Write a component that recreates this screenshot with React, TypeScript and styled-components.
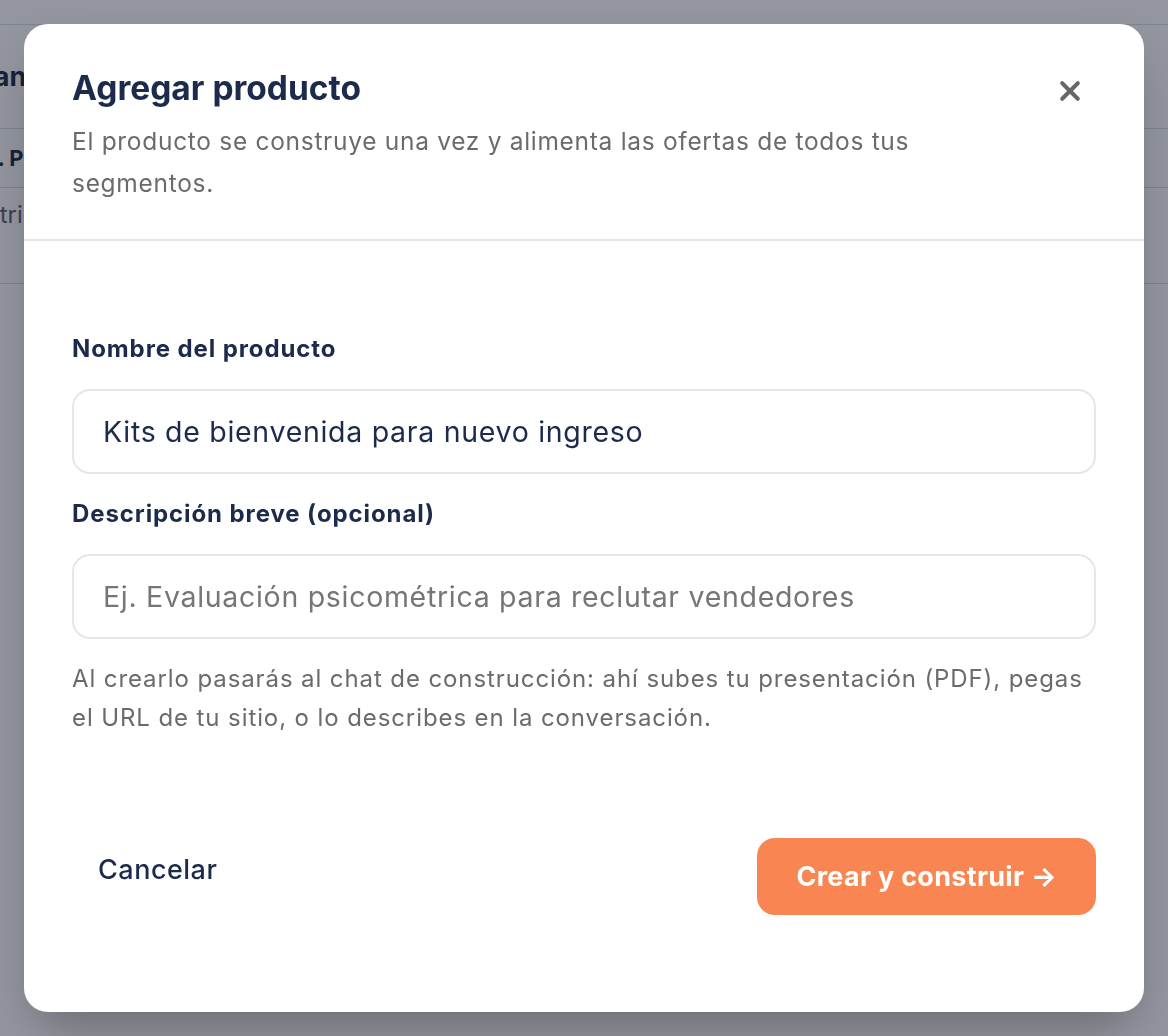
import React, { useState } from 'react'
import styled, { createGlobalStyle } from 'styled-components'

const GlobalStyle = createGlobalStyle`
  html,
  body {
    margin: 0;
    padding: 0;
    background: #ffffff;
    font-family: Inter, 'Noto Sans', sans-serif;
    -webkit-font-smoothing: antialiased;
  }
  * {
    box-sizing: border-box;
  }
`

// the page that sits behind the dialog
const Page = styled.main`
  height: 1036px;
  overflow: hidden;
  padding-top: 24px;
`

const PageRow = styled.div<{ $height: number; $top?: boolean }>`
  height: ${({ $height }) => $height}px;
  display: flex;
  align-items: ${({ $top }) => ($top ? 'flex-start' : 'center')};
  padding-top: ${({ $top }) => ($top ? '12px' : '0')};
  border-top: 1px solid #d9dce2;
  white-space: nowrap;
`

const PageTitle = styled.h1<{ $shift: number }>`
  margin: 0 0 0 ${({ $shift }) => $shift}px;
  font-size: 27px;
  font-weight: 700;
  color: #1c2b4b;
`

const PageHead = styled.span<{ $shift: number }>`
  margin-left: ${({ $shift }) => $shift}px;
  font-size: 22px;
  font-weight: 700;
  color: #1c2b4b;
`

const PageCell = styled.span<{ $shift: number }>`
  margin-left: ${({ $shift }) => $shift}px;
  font-size: 24px;
  color: #5f6470;
`

const Overlay = styled.div`
  position: fixed;
  inset: 0;
  background: rgba(15, 23, 42, 0.45);
  display: flex;
  padding: 24px;
`

const Dialog = styled.section`
  flex: 1;
  background: #ffffff;
  border-radius: 24px;
  box-shadow: 0 25px 50px -12px rgba(0, 0, 0, 0.3);
  display: flex;
  flex-direction: column;
  overflow: hidden;
`

const Header = styled.header`
  display: flex;
  align-items: flex-start;
  justify-content: space-between;
  padding: 44px 48px 35px;
  border-bottom: 2px solid #e7e6e1;
`

const HeaderText = styled.div`
  display: flex;
  flex-direction: column;
  gap: 12px;
  max-width: 880px;
`

const Title = styled.h2`
  margin: 0;
  font-size: 33.5px;
  line-height: 40px;
  font-weight: 700;
  color: #1c2b4b;
`

const Subtitle = styled.p`
  margin: 0;
  font-size: 24.5px;
  line-height: 42px;
  letter-spacing: 0.7px;
  color: #6b6b6b;
`

const CloseButton = styled.button`
  margin-top: 8px;
  margin-right: 11px;
  padding: 4px;
  background: none;
  border: none;
  cursor: pointer;
  display: flex;
  color: #676767;
`

const Body = styled.div`
  flex: 1;
  display: flex;
  flex-direction: column;
  padding: 93px 48px 0;
`

const Fields = styled.div`
  display: flex;
  flex-direction: column;
  gap: 25px;
`

const Field = styled.div`
  display: flex;
  flex-direction: column;
  gap: 25px;
`

const Label = styled.label`
  font-size: 24px;
  line-height: 30px;
  font-weight: 700;
  letter-spacing: 0.9px;
  color: #1c2b4b;
`

const Input = styled.input`
  width: 100%;
  height: 85px;
  padding: 0 29px;
  border: 2px solid #e7e6e1;
  border-radius: 18px;
  font-family: Inter, 'Noto Sans', sans-serif;
  font-size: 28.5px;
  letter-spacing: 0.7px;
  color: #1c2b4b;
  background: #ffffff;
  outline: none;

  &::placeholder {
    color: #767676;
  }
`

const Help = styled.p`
  margin: 20px 0 0;
  font-size: 24px;
  line-height: 39px;
  letter-spacing: 0.9px;
  color: #6b6b6b;
`

const Footer = styled.footer`
  display: flex;
  align-items: center;
  justify-content: space-between;
  padding: 0 48px 97px 48px;
`

const GhostButton = styled.button`
  background: none;
  border: none;
  padding: 12px 26px;
  margin-bottom: 14px;
  font-family: Inter, 'Noto Sans', sans-serif;
  font-size: 27px;
  font-weight: 500;
  letter-spacing: 0.5px;
  color: #1c2b4b;
  cursor: pointer;
`

const PrimaryButton = styled.button`
  height: 77px;
  padding: 0 39px;
  border: none;
  border-radius: 18px;
  background: #f98652;
  font-family: Inter, 'Noto Sans', sans-serif;
  font-size: 27px;
  font-weight: 700;
  letter-spacing: 0.3px;
  color: #ffffff;
  cursor: pointer;
`

const CloseIcon = () => (
  <svg width="22" height="22" viewBox="0 0 24 24" fill="none">
    <path
      d="M3.5 3.5L20.5 20.5M20.5 3.5L3.5 20.5"
      stroke="currentColor"
      strokeWidth="4.4"
      strokeLinecap="round"
    />
  </svg>
)

const App = () => {
  const [name, setName] = useState('Kits de bienvenida para nuevo ingreso')
  const [description, setDescription] = useState('')

  return (
    <>
      <GlobalStyle />
      <Page>
        <PageRow $height={104}>
          <PageTitle $shift={-31}>Planes</PageTitle>
        </PageRow>
        <PageRow $height={59}>
          <PageHead $shift={-12}>1. Pe</PageHead>
        </PageRow>
        <PageRow $height={96} $top>
          <PageCell $shift={-36}>Métrica</PageCell>
        </PageRow>
        <PageRow $height={200} />
      </Page>
      <Overlay>
        <Dialog role="dialog" aria-labelledby="dialog-title">
          <Header>
            <HeaderText>
              <Title id="dialog-title">Agregar producto</Title>
              <Subtitle>
                El producto se construye una vez y alimenta las ofertas de todos tus
                segmentos.
              </Subtitle>
            </HeaderText>
            <CloseButton aria-label="Cerrar">
              <CloseIcon />
            </CloseButton>
          </Header>
          <Body>
            <Fields>
              <Field>
                <Label htmlFor="product-name">Nombre del producto</Label>
                <Input
                  id="product-name"
                  value={name}
                  onChange={(e) => setName(e.target.value)}
                />
              </Field>
              <Field>
                <Label htmlFor="product-description">Descripción breve (opcional)</Label>
                <Input
                  id="product-description"
                  placeholder="Ej. Evaluación psicométrica para reclutar vendedores"
                  value={description}
                  onChange={(e) => setDescription(e.target.value)}
                />
              </Field>
            </Fields>
            <Help>
              Al crearlo pasarás al chat de construcción: ahí subes tu presentación (PDF),
              pegas el URL de tu sitio, o lo describes en la conversación.
            </Help>
          </Body>
          <Footer>
            <GhostButton>Cancelar</GhostButton>
            <PrimaryButton>Crear y construir →</PrimaryButton>
          </Footer>
        </Dialog>
      </Overlay>
    </>
  )
}

export default App
